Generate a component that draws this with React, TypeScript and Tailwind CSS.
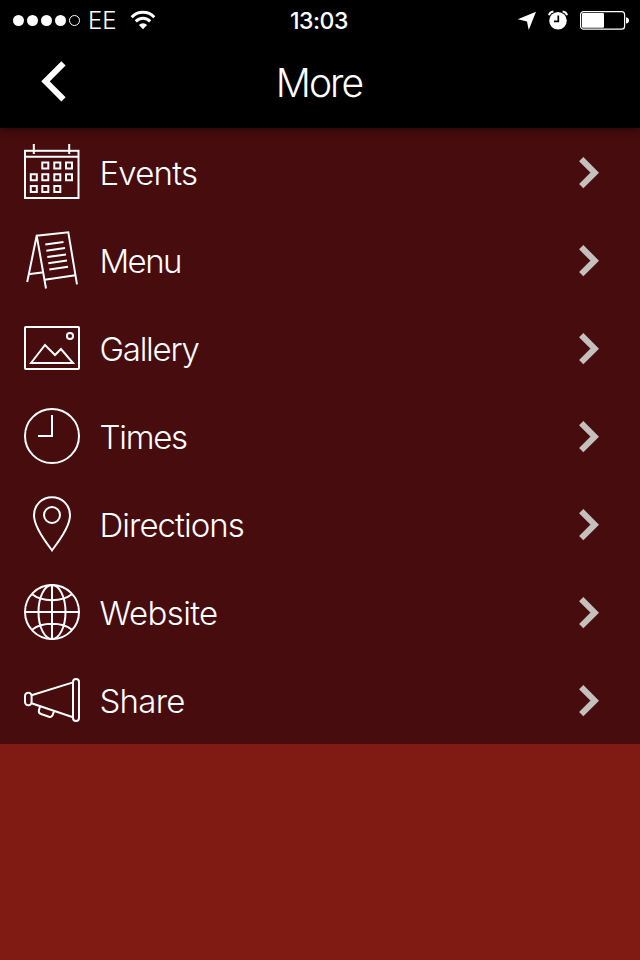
import type { ReactNode } from 'react';

const events = (
  <>
    <rect x="1" y="6.8" width="53.5" height="47.2" />
    <path d="M1 12.7H54.5M9.8 0V10M45.2 0V10" />
    <path d="M18.3 18.4h6v6h-6zM30.3 18.4h6v6h-6zM42 18.4h6v6h-6zM6.8 30.3h6v6h-6zM18.3 30.3h6v6h-6zM30.3 30.3h6v6h-6zM42 30.3h6v6h-6zM6.8 42h6v6h-6zM18.3 42h6v6h-6zM30.3 42h6v6h-6z" />
  </>
);

const menu = (
  <>
    <path d="M3.2 50L12.7 3.7L44.3 0.3L53 52.3M12.7 3.7L22 56.5" />
    <path d="M4.3 42.3L19.7 40.2M20.7 47.7L51.3 43.3" />
    <path d="M21.3 12.4L39.5 10M22.3 18.7L41 16.1M23.3 25L42 22.4M24.3 31.2L43 28.6M25.3 37.4L44 34.8" />
  </>
);

const gallery = (
  <>
    <rect x="1" y="7" width="54" height="42" rx="0.8" />
    <circle cx="46" cy="16" r="3.1" />
    <path d="M7 43L21 25L31 35L37 29L49 43Z" />
  </>
);

const times = (
  <>
    <circle cx="28" cy="28" r="27" />
    <path d="M28 7V28H14" />
  </>
);

const directions = (
  <>
    <path d="M28 54.3C22 46.5 10 31.5 10 19.3C10 9 18 1.2 28 1.2S46 9 46 19.3C46 31.5 34 46.5 28 54.3Z" />
    <circle cx="28" cy="19" r="8" />
  </>
);

const website = (
  <>
    <circle cx="28" cy="28" r="27" />
    <ellipse cx="28" cy="28" rx="13.5" ry="27" />
    <path d="M28 1V55M1 28H55M7.8 10C18 18.2 38 18.2 48.2 10M7.8 46C18 37.8 38 37.8 48.2 46" />
  </>
);

const share = (
  <>
    <rect x="49" y="7" width="6" height="42" rx="3" />
    <rect x="1" y="20.7" width="6.6" height="12.6" rx="3.2" />
    <path d="M7.5 23.2L49 10.4M7.5 31.2L49 45.3" />
    <path d="M16 34.4L14.9 38.4Q14.3 41 17 42L25 44.8Q27.6 45.5 28.6 43.2L30 39.4" />
  </>
);

type Item = { label: string; icon: ReactNode; tracking: string };

const items: Item[] = [
  { label: 'Events', icon: events, tracking: 'tracking-[-0.8px]' },
  { label: 'Menu', icon: menu, tracking: 'tracking-[-1.6px]' },
  { label: 'Gallery', icon: gallery, tracking: 'tracking-[-1.25px]' },
  { label: 'Times', icon: times, tracking: 'tracking-[-1.25px]' },
  { label: 'Directions', icon: directions, tracking: 'tracking-[-0.95px]' },
  { label: 'Website', icon: website, tracking: 'tracking-[-0.65px]' },
  { label: 'Share', icon: share, tracking: 'tracking-[-0.75px]' },
];

function StatusBar() {
  return (
    <div className="grid h-10 grid-cols-3 items-center pr-[11px] pl-[13px]">
      <div className="flex items-center">
        <div className="flex gap-[3px]">
          <span className="size-[11px] rounded-full bg-white" />
          <span className="size-[11px] rounded-full bg-white" />
          <span className="size-[11px] rounded-full bg-white" />
          <span className="size-[11px] rounded-full bg-white" />
          <span className="size-[11px] rounded-full border border-white" />
        </div>
        <span className="ml-2 pt-0.5 text-[24px] leading-9 font-light">EE</span>
        <svg className="ml-[13px] h-5 w-[26px]" viewBox="0 0 26 20" fill="none" stroke="white" strokeWidth="3">
          <path d="M1.7 7.2a15.6 15.6 0 0 1 22.6 0" />
          <path d="M5.8 11.4a10 10 0 0 1 14.4 0" />
          <path d="M13 19.2L8.9 15a5.7 5.7 0 0 1 8.2 0z" fill="white" stroke="none" />
        </svg>
      </div>
      <span className="pt-0.5 pr-1 text-center text-[23px] leading-9 font-medium tracking-[-0.4px]">13:03</span>
      <div className="flex items-center justify-end">
        <svg className="h-5 w-5" viewBox="0 0 20 20" fill="white">
          <path d="M19 1.8L11.7 20L10 11.6L0.8 9.2Z" />
        </svg>
        <svg className="ml-[11px] h-5 w-5" viewBox="0 0 20 20">
          <path d="M1 5.2A5 5 0 0 1 5.4 1.6M14.6 1.6A5 5 0 0 1 19 5.2" fill="none" stroke="white" strokeWidth="2" />
          <circle cx="10" cy="10.7" r="8.8" fill="white" />
          <path d="M10.3 5.5V11.4H6" fill="none" stroke="black" strokeWidth="1.7" />
        </svg>
        <svg className="ml-3 h-5 w-[49px]" viewBox="0 0 49 20">
          <rect x="0.6" y="1.6" width="44" height="17.6" rx="3" fill="none" stroke="white" strokeWidth="1.2" />
          <rect x="2" y="3" width="22" height="14.8" rx="1" fill="white" />
          <path d="M46 7.2q3 0.6 3 3.2t-3 3.2z" fill="white" />
        </svg>
      </div>
    </div>
  );
}

function Header() {
  return (
    <header className="relative h-32 bg-black shadow-[0_1px_8px_rgba(0,0,0,0.55)]">
      <StatusBar />
      <div className="grid h-[88px] grid-cols-3 items-center">
        <button className="ml-9 w-9" aria-label="Back">
          <svg className="h-12 w-9" viewBox="0 0 36 48" fill="none" stroke="white" strokeWidth="6">
            <path d="M27.5 3.3L9.5 21.3L27.5 39.3" />
          </svg>
        </button>
        <h1 className="pr-0.5 pb-1 text-center text-[39px] leading-none font-light tracking-[-1.9px]">More</h1>
      </div>
    </header>
  );
}

function Row({ label, icon, tracking }: Item) {
  return (
    <li className="flex h-[88px] items-center pr-[39px] pl-6">
      <svg className="size-14 overflow-visible" viewBox="0 0 56 56" fill="none" stroke="currentColor" strokeWidth="2">
        {icon}
      </svg>
      <span className={`ml-[19.5px] flex-1 pt-0.5 text-[33px] leading-10 font-light ${tracking}`}>{label}</span>
      <svg className="h-10 w-6" viewBox="0 0 24 40" fill="none" stroke="#c4c0be" strokeWidth="6.1">
        <path d="M4.2 7.2L17.7 20.7L4.2 34.2" />
      </svg>
    </li>
  );
}

export default function App() {
  return (
    <div className="h-[960px] w-[640px] overflow-hidden bg-[#801b13] font-['Inter','Liberation_Sans',sans-serif] text-white">
      <Header />
      <ul className="bg-[#460c0e]">
        {items.map((item) => (
          <Row key={item.label} {...item} />
        ))}
      </ul>
    </div>
  );
}
